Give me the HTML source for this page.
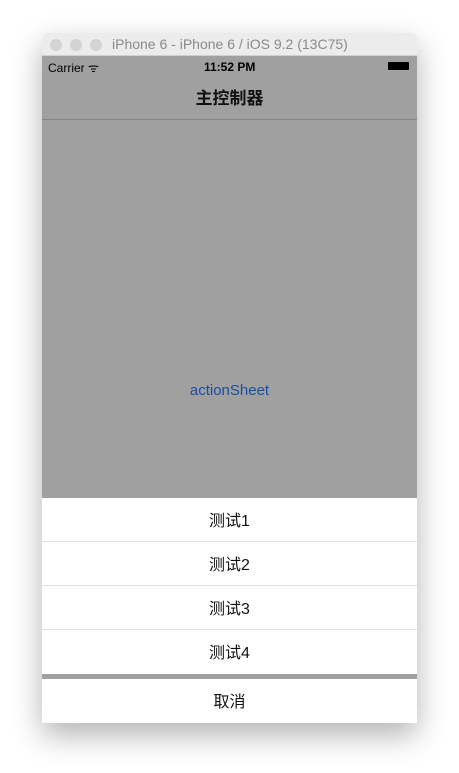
<!DOCTYPE html><html><head><meta charset="utf-8"><style>
body{margin:0;width:459px;height:773px;background:#fff;position:relative;overflow:hidden;font-family:"Liberation Sans","Noto Sans CJK SC",sans-serif}
.win{position:absolute;left:42px;top:33px;width:375px;height:690px;box-shadow:0 12px 30px rgba(0,0,0,.3);border-radius:5px 5px 0 0;overflow:hidden}
.tb{height:23px;background:#ececec;border-bottom:1px solid #d0d0d0;position:relative;box-sizing:border-box}
.dot{position:absolute;top:6px;width:12px;height:12px;border-radius:50%;background:#d3d3d3}
.tt{position:absolute;left:70px;top:3px;font-size:14px;color:#8a8a8a}
.scr{position:absolute;top:23px;left:0;width:375px;height:667px;background:#a0a0a0}
.sb{height:20px;position:relative;font-size:12px}
.nav{height:44px;border-bottom:1px solid #858585;text-align:center;line-height:46px;font-size:17px;font-weight:bold;color:#111;box-sizing:border-box}
.row{position:absolute;left:0;width:375px;height:44px;background:#fff;text-align:center;line-height:47px;font-size:16px;color:#111}
</style></head><body>
<div class="win">
<div class="tb"><div class="dot" style="left:8px"></div><div class="dot" style="left:28px"></div><div class="dot" style="left:48px"></div><div class="tt">iPhone 6 - iPhone 6 / iOS 9.2 (13C75)</div></div>
<div class="scr">
<div class="sb"><span style="position:absolute;left:6px;top:3px">Carrier ᯤ</span><span style="position:absolute;left:162px;top:4px;font-weight:bold">11:52 PM</span><span style="position:absolute;right:8px;top:6px;width:21px;height:8px;background:#000;border-radius:1px"></span></div>
<div class="nav">主控制器</div>
<div style="position:absolute;top:326px;width:375px;text-align:center;font-size:15px;color:#1a4fa0">actionSheet</div>
<div class="row" style="top:442px;border-bottom:1px solid #e0e0e0;box-sizing:border-box">测试1</div>
<div class="row" style="top:486px;border-bottom:1px solid #e0e0e0;box-sizing:border-box">测试2</div>
<div class="row" style="top:530px;border-bottom:1px solid #e0e0e0;box-sizing:border-box">测试3</div>
<div class="row" style="top:574px">测试4</div>
<div class="row" style="top:623px">取消</div>
</div></div>
</body></html>
